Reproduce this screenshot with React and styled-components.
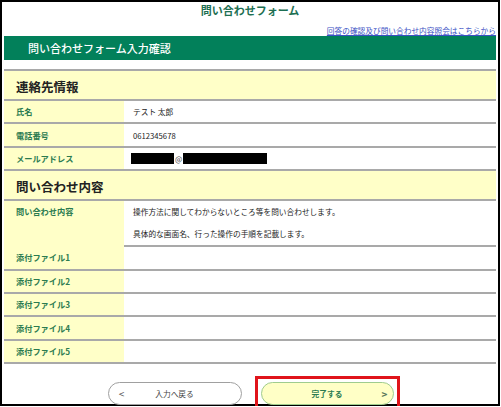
import React from "react";
import styled, { createGlobalStyle } from "styled-components";

const GlobalStyle = createGlobalStyle`
  body {
    margin: 0;
    background: #fff;
    font-family: "Noto Sans CJK JP", "Noto Sans", sans-serif;
  }
`;

const Frame = styled.div`
  box-sizing: border-box;
  width: 500px;
  height: 406px;
  border: 2px solid #000;
  padding: 0 2px;
`;

const PageTitle = styled.h1`
  margin: 0;
  font-size: 11px;
  line-height: 17px;
  font-weight: 700;
  color: #1d6f52;
  text-align: center;
`;

const LinkRow = styled.div`
  margin-top: 7px;
  height: 10px;
  text-align: right;
  font-size: 7.7px;
  line-height: 10px;
`;

const TopLink = styled.a`
  color: #3b50c4;
  text-decoration: underline;
  cursor: pointer;
`;

const FormBar = styled.div`
  height: 24px;
  background: #02805a;
  color: #fff;
  font-size: 11px;
  font-weight: 500;
  display: flex;
  align-items: center;
  padding-left: 24px;
`;

const Table = styled.div`
  margin-top: 9px;
  border-bottom: 2px solid #a9a9a9;
`;

const SectionHeader = styled.div`
  box-sizing: border-box;
  height: 30px;
  border-top: 2px solid #a9a9a9;
  background: #ffffc8;
  padding: 2px 0 0 12px;
  display: flex;
  align-items: center;
  font-size: 12.5px;
  font-weight: 700;
  color: #222;
`;

const Row = styled.div`
  box-sizing: border-box;
  height: ${(p) => p.$height || 23.4}px;
  border-top: 2px solid #a9a9a9;
  display: grid;
  grid-template-columns: 120px 1fr;
`;

const Label = styled.div`
  background: #ffffc8;
  padding: ${(p) => (p.$top ? "5px" : "0")} 0 0 12px;
  display: flex;
  align-items: ${(p) => (p.$top ? "flex-start" : "center")};
  font-size: 8.2px;
  line-height: 11px;
  font-weight: 700;
  color: #2b7b50;
`;

const Value = styled.div`
  padding-left: 9px;
  display: flex;
  align-items: center;
  font-size: 7.7px;
  line-height: 11px;
  color: #222;
`;

const Paragraphs = styled.div`
  padding: 5px 0 0 9px;
  font-size: 7.7px;
  line-height: 11px;
  color: #222;

  p {
    margin: 0 0 10.5px;
  }
`;

const Redacted = styled.span`
  display: inline-block;
  width: ${(p) => p.$width}px;
  height: 11px;
  background: #000;
  margin-left: ${(p) => p.$offset || 0}px;
`;

const At = styled.span`
  margin: 0 1px;
  color: #444;
`;

const Footer = styled.div`
  margin-top: 12px;
  padding-left: 7px;
  display: flex;
  justify-content: center;
  align-items: flex-start;
  gap: 13px;
`;

const Highlight = styled.div`
  border: 3px solid #e0141b;
  padding: 3px;
`;

const PillButton = styled.button`
  box-sizing: border-box;
  width: ${(p) => (p.$primary ? 133 : 134)}px;
  height: 23px;
  margin-top: ${(p) => (p.$primary ? 0 : 6)}px;
  border-radius: 12px;
  border: 1px solid ${(p) => (p.$primary ? "#9fcc8e" : "#a0a0a0")};
  background: ${(p) => (p.$primary ? "#ffffc6" : "#fff")};
  color: ${(p) => (p.$primary ? "#2b7b50" : "#444")};
  font-family: inherit;
  font-size: 7.7px;
  font-weight: ${(p) => (p.$primary ? 700 : 400)};
  display: grid;
  grid-template-columns: 14px 1fr 14px;
  align-items: center;
  padding: ${(p) => (p.$primary ? "0 1px" : "0 6px")};
  cursor: pointer;
`;

const Arrow = styled.span`
  font-size: 10px;
  color: ${(p) => (p.$green ? "#5a7a5a" : "#555")};
  text-align: center;
`;

const attachments = [1, 2, 3, 4, 5];

export default function App() {
  return (
    <>
      <GlobalStyle />
      <Frame>
        <PageTitle>問い合わせフォーム</PageTitle>
        <LinkRow>
          <TopLink>回答の確認及び問い合わせ内容照会はこちらから</TopLink>
        </LinkRow>
        <FormBar>問い合わせフォーム入力確認</FormBar>

        <Table>
          <SectionHeader>連絡先情報</SectionHeader>
          <Row>
            <Label>氏名</Label>
            <Value>テスト 太郎</Value>
          </Row>
          <Row>
            <Label>電話番号</Label>
            <Value>0612345678</Value>
          </Row>
          <Row>
            <Label>メールアドレス</Label>
            <Value>
              <Redacted $width={43} $offset={-2} />
              <At>@</At>
              <Redacted $width={84} />
            </Value>
          </Row>

          <SectionHeader>問い合わせ内容</SectionHeader>
          <Row $height={46}>
            <Label $top>問い合わせ内容</Label>
            <Paragraphs>
              <p>操作方法に関してわからないところ等を問い合わせします。</p>
              <p>具体的な画面名、行った操作の手順を記載します。</p>
            </Paragraphs>
          </Row>
          {attachments.map((n) => (
            <Row key={n}>
              <Label>添付ファイル{n}</Label>
              <Value />
            </Row>
          ))}
        </Table>

        <Footer>
          <PillButton>
            <Arrow>&lt;</Arrow>
            <span>入力へ戻る</span>
            <span />
          </PillButton>
          <Highlight>
            <PillButton $primary>
              <span />
              <span>完了する</span>
              <Arrow $green>&gt;</Arrow>
            </PillButton>
          </Highlight>
        </Footer>
      </Frame>
    </>
  );
}
